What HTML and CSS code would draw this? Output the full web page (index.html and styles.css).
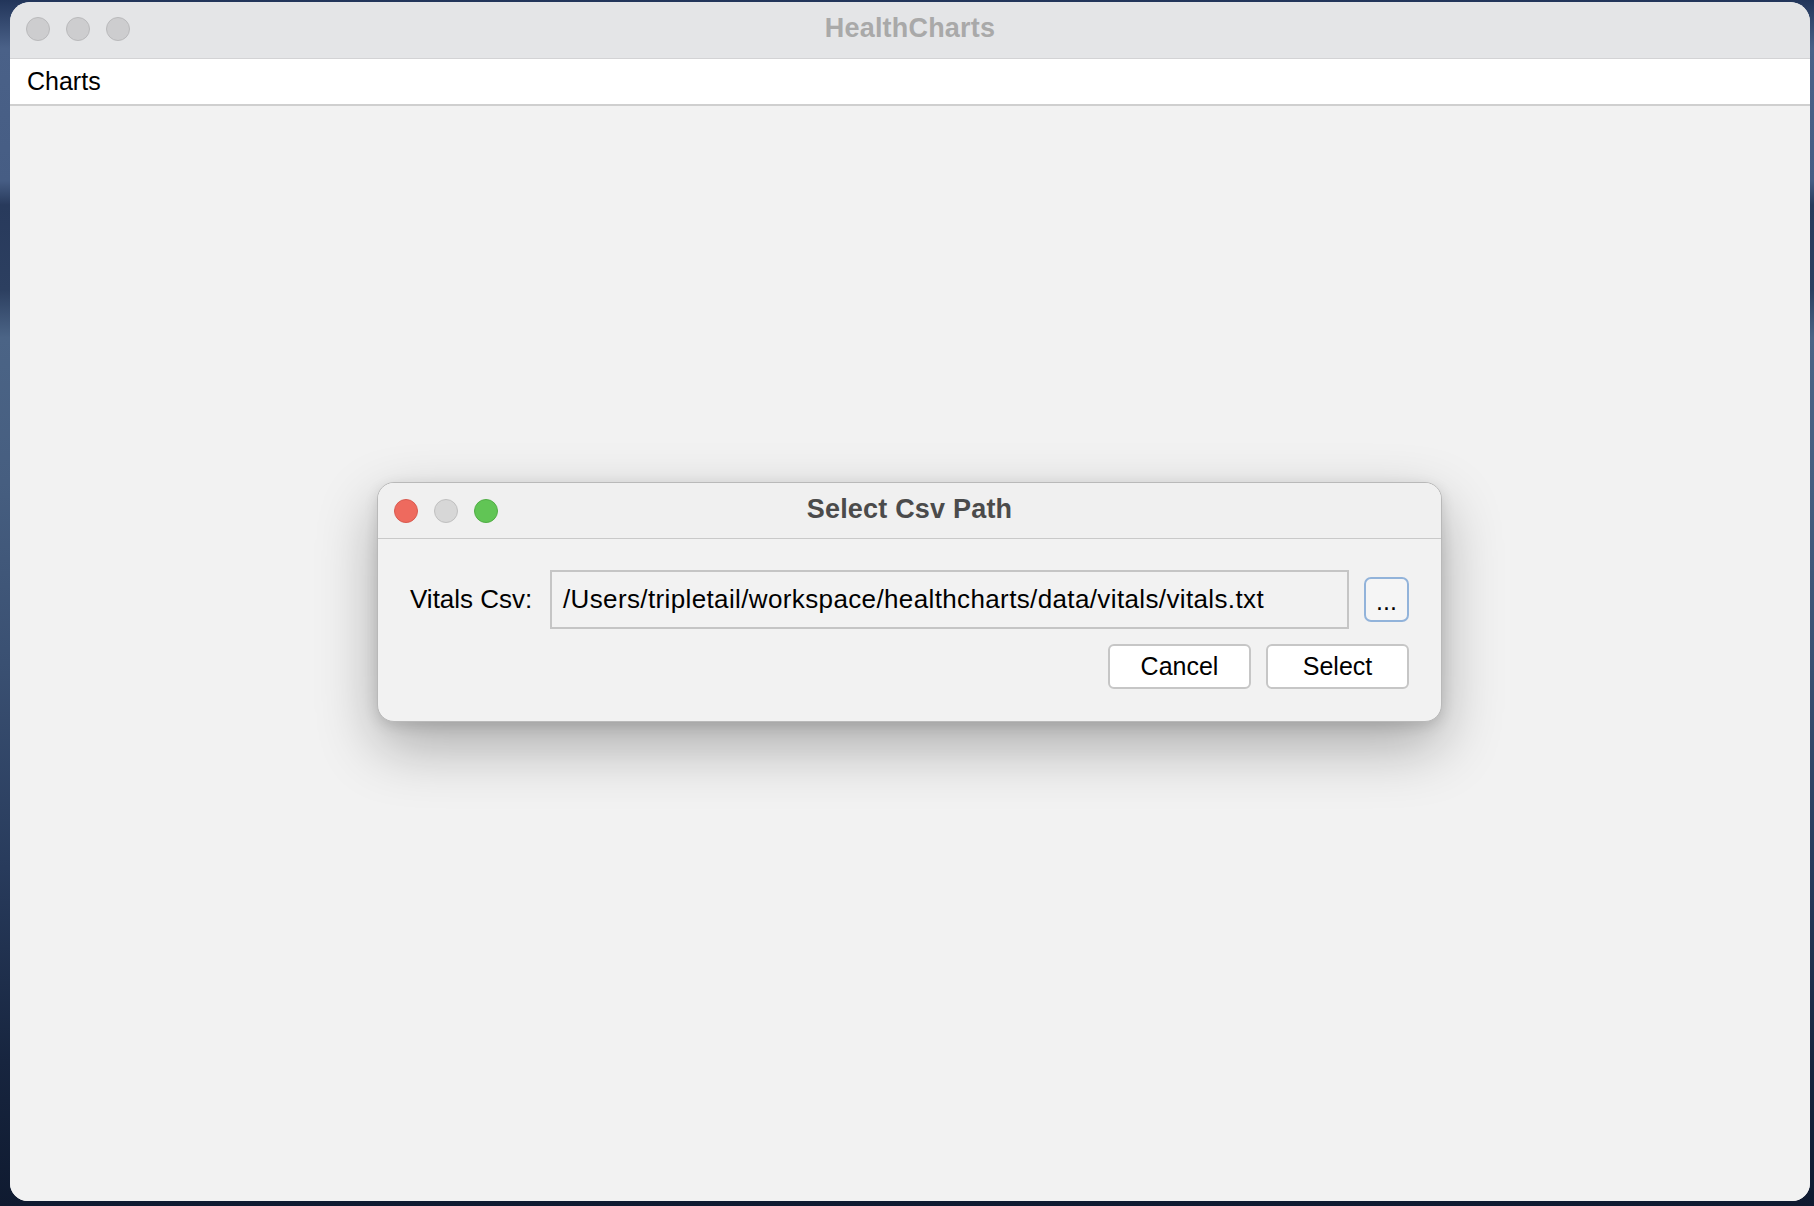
FILE: index.html
```html
<!DOCTYPE html>
<html lang="en">
<head>
<meta charset="utf-8">
<title>HealthCharts</title>
<link rel="stylesheet" href="styles.css">
</head>
<body>
<div class="desktop">
  <div class="window">
    <div class="titlebar">
      <div class="lights">
        <span class="light grey"></span>
        <span class="light grey"></span>
        <span class="light grey"></span>
      </div>
      <div class="win-title">HealthCharts</div>
      <div class="spacer"></div>
    </div>
    <div class="menubar"><span class="menu-item">Charts</span></div>
    <div class="content"></div>
  </div>

  <div class="dialog">
    <div class="dlg-titlebar">
      <div class="lights">
        <span class="light red"></span>
        <span class="light dgrey"></span>
        <span class="light green"></span>
      </div>
      <div class="dlg-title">Select Csv Path</div>
      <div class="spacer"></div>
    </div>
    <div class="dlg-body">
      <div class="row">
        <label class="field-label">Vitals Csv:</label>
        <div class="field">/Users/tripletail/workspace/healthcharts/data/vitals/vitals.txt</div>
        <button class="dots">...</button>
      </div>
      <div class="actions">
        <button class="btn">Cancel</button>
        <button class="btn">Select</button>
      </div>
    </div>
  </div>
</div>
</body>
</html>
```

FILE: styles.css
```css
* { box-sizing: border-box; }

html, body {
  margin: 0;
  padding: 0;
  width: 1814px;
  height: 1206px;
  overflow: hidden;
}

body {
  font-family: "Liberation Sans", Arial, sans-serif;
  color: #000;
}

.desktop {
  position: relative;
  width: 1814px;
  height: 1206px;
  padding: 2px 0 0 10px;
  background:
    linear-gradient(to bottom,
      #22355a 0%,
      #4a6188 4%,
      #465d84 15%,
      #283a5c 17%,
      #2c3f60 24%,
      #4b6486 28%,
      #465e80 40%,
      #3a5072 55%,
      #283b5c 72%,
      #17253f 88%,
      #0f1a30 100%);
}

.window {
  width: 1800px;
  height: 1199px;
  border-radius: 20px 20px 18px 18px;
  overflow: hidden;
  display: flex;
  flex-direction: column;
  background: #f2f2f2;
}

.titlebar {
  height: 57px;
  flex: none;
  background: #e4e5e7;
  border-bottom: 1px solid #d3d3d5;
  display: grid;
  grid-template-columns: 1fr auto 1fr;
  align-items: center;
  padding: 0 16px 2px 16px;
}

.lights {
  display: flex;
  gap: 16px;
  align-items: center;
}

.light {
  width: 24px;
  height: 24px;
  border-radius: 50%;
  display: block;
}

.light.grey { background: #cdcdcf; border: 1px solid #b9b9bb; }
.light.dgrey { background: #d7d7d7; border: 1px solid #bfbfbf; }
.light.red { background: #ee6a5e; border: 1px solid #d85a4f; }
.light.green { background: #61c555; border: 1px solid #50ad45; }

.titlebar .win-title {
  margin-bottom: 1px;
}

.win-title {
  font-size: 27px;
  font-weight: bold;
  color: #a9a9a9;
  letter-spacing: 0.2px;
}

.menubar {
  height: 47px;
  flex: none;
  background: #ffffff;
  border-bottom: 2px solid #cfcfcf;
  display: flex;
  align-items: center;
  padding: 0 0 1px 17px;
}

.menu-item {
  font-size: 25px;
}

.content {
  flex: 1;
  background: #f2f2f2;
}

/* Modal dialog lies over the window */
.dialog {
  position: absolute;
  left: 377px;
  top: 482px;
  width: 1065px;
  height: 240px;
  border: 1px solid #b9b9b9;
  border-radius: 17px;
  background: #f2f2f2;
  overflow: hidden;
  box-shadow: 0 24px 60px rgba(0, 0, 0, 0.30), 0 4px 14px rgba(0, 0, 0, 0.12);
  display: flex;
  flex-direction: column;
}

.dlg-titlebar {
  height: 56px;
  flex: none;
  background: #f0f0f0;
  border-bottom: 1px solid #c9c9c9;
  display: grid;
  grid-template-columns: 1fr auto 1fr;
  align-items: center;
  padding: 0 16px 0 16px;
}

.dlg-title {
  font-size: 27px;
  font-weight: bold;
  color: #4b4b4b;
  letter-spacing: 0.2px;
  margin-bottom: 2px;
}

.dlg-body {
  flex: 1;
  padding: 31px 32px 31px 32px;
  display: flex;
  flex-direction: column;
  gap: 15px;
}

.row {
  display: flex;
  align-items: center;
  gap: 15px;
  height: 59px;
}

.field-label {
  font-size: 26px;
  width: 125px;
  flex: none;
  white-space: nowrap;
}

.field {
  flex: 1;
  height: 59px;
  border: 2px solid #c5c5c5;
  background: #f2f2f2;
  font-size: 26px;
  letter-spacing: 0.37px;
  padding: 0 11px;
  display: flex;
  align-items: center;
  white-space: nowrap;
  overflow: hidden;
}

.dots {
  width: 45px;
  height: 45px;
  flex: none;
  border: 2px solid #92b3da;
  border-radius: 7px;
  background: #f5f5f5;
  font-family: "Liberation Sans", Arial, sans-serif;
  font-size: 25px;
  color: #000;
  padding: 0;
  line-height: 45px;
}

.actions {
  display: flex;
  justify-content: flex-end;
  gap: 15px;
}

.btn {
  width: 143px;
  height: 45px;
  border: 2px solid #c6c6c6;
  border-radius: 6px;
  background: #ffffff;
  font-family: "Liberation Sans", Arial, sans-serif;
  font-size: 25px;
  color: #000;
  padding: 0;
}
```
